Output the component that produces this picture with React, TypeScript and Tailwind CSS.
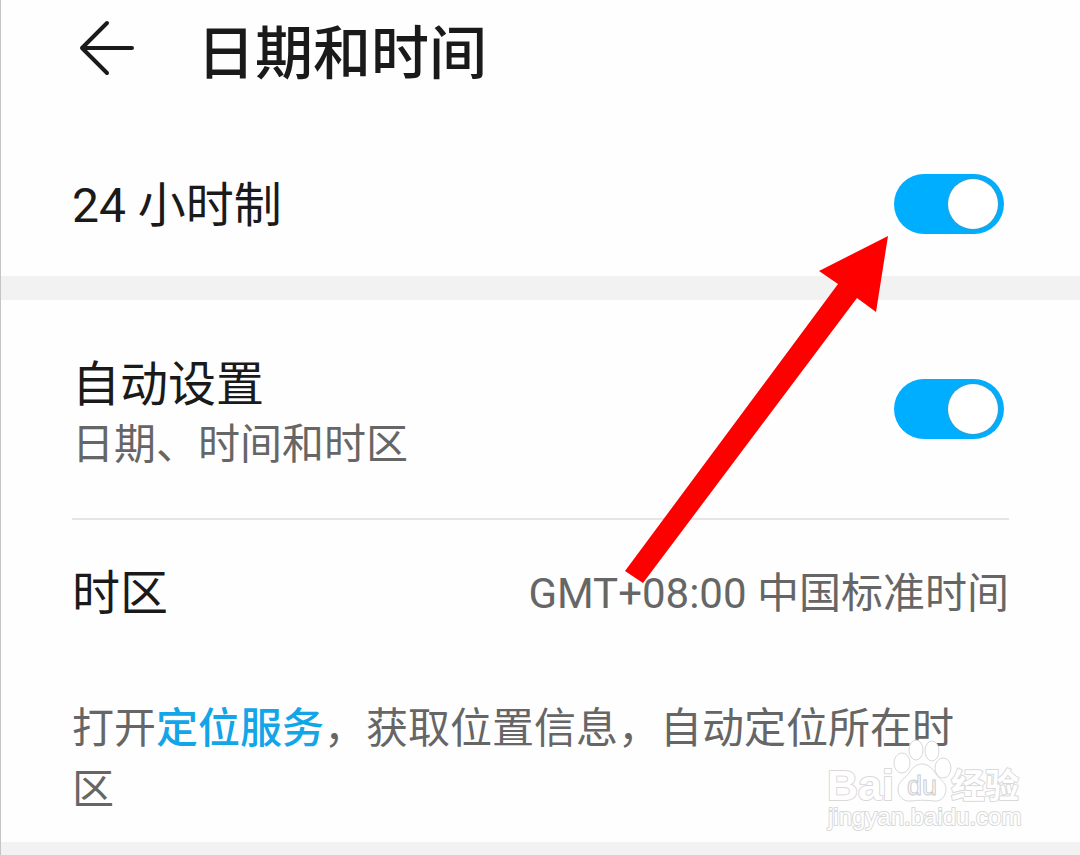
import React, { useState } from "react";

const Switch = ({ id, defaultChecked }: { id: string; defaultChecked?: boolean }) => {
    const [checked, setChecked] = useState(!!defaultChecked);
    return (
        <input
            id={id}
            type="checkbox"
            checked={checked}
            onChange={(e) => setChecked(e.target.checked)}
            className="mr-[5px] flex h-[60px] w-[110px] shrink-0 cursor-pointer appearance-none items-center rounded-full bg-gray-300 px-[6px] before:size-[50px] before:rounded-full before:bg-white before:content-[''] checked:justify-end checked:bg-[#00aeff] before:shadow-[0_0_2px_1px_#2f9fd0]"
        />
    )
}

const BackIcon = () => (
    <svg viewBox="0 0 56 56" className="size-14" fill="none" stroke="#1a1a1a" strokeWidth="4" strokeLinecap="round" strokeLinejoin="round" aria-hidden="true">
        <path d="M53 28H3M28 3L3 28L28 53" />
    </svg>
)

const PointerArrow = () => (
    <svg viewBox="0 0 264 348" className="pointer-events-none absolute top-[236px] right-[191px] w-[264px]" aria-hidden="true">
        <path d="M263 0L194 35L213 48L0 335L18 347L232 62L251 76Z" fill="#ff0000" />
    </svg>
)

const Watermark = () => (
    <svg viewBox="0 0 200 96" className="pointer-events-none absolute right-[56px] bottom-4 w-[200px] overflow-visible" fill="#ffffff" stroke="#d9d9d9" strokeWidth="1" aria-label="Baidu 经验">
        <g strokeWidth="2" paintOrder="stroke" strokeLinejoin="round">
            <text x="3" y="57" fontSize="43" fontWeight="700" fontFamily="'Liberation Sans', Arial, sans-serif">Bai</text>
            <text x="127" y="55" fontSize="34" fontWeight="700" fontFamily="'Noto Sans CJK SC', sans-serif">经验</text>
            <text x="4" y="82" fontSize="24" fontFamily="'Liberation Sans', Arial, sans-serif">jingyan.baidu.com</text>
        </g>
        <ellipse cx="78" cy="20" rx="8" ry="10" />
        <ellipse cx="92" cy="7" rx="7" ry="10" />
        <ellipse cx="108" cy="8" rx="7" ry="10" />
        <ellipse cx="119" cy="25" rx="8" ry="10" />
        <path d="M98 21C92 21 88 25 85 30C82 35 74 38 74 46C74 54 80 59 87 58C94 57 102 57 110 58C117 59 122 53 122 46C122 39 115 36 112 31C108 25 104 21 98 21Z" />
        <text x="83" y="52" fontSize="27" stroke="#cccccc" strokeWidth="1" fontFamily="'Liberation Sans', Arial, sans-serif">du</text>
    </svg>
)

const App = () => {
    return (
        <div className="relative flex min-h-screen flex-col border-l border-[#c4c4c4] bg-[#fefefe] font-[Roboto,'Noto_Sans_CJK_SC',sans-serif] text-[#1a1a1a]">
            <header className="mb-7 flex h-[104px] items-center gap-[62px] px-[78px]">
                <button type="button" aria-label="返回" className="-mt-2 cursor-pointer">
                    <BackIcon />
                </button>
                <h1 className="pt-1 text-[58px] leading-[64px] font-medium">日期和时间</h1>
            </header>

            <main>
                <section className="px-[71px]">
                    <div className="flex h-36 items-center justify-between">
                        <label htmlFor="hour24" className="pt-1 text-[48px] leading-[60px]">24 小时制</label>
                        <Switch id="hour24" defaultChecked />
                    </div>
                </section>

                <div className="h-6 bg-[#f2f2f2]" />

                <section className="px-[71px]">
                    <div className="flex h-[220px] items-center justify-between border-b-2 border-[#e5e5e5]">
                        <label htmlFor="auto" className="flex flex-col pt-3">
                            <span className="text-[48px] leading-[60px]">自动设置</span>
                            <span className="text-[42px] leading-[60px] text-[#666666]">日期、时间和时区</span>
                        </label>
                        <Switch id="auto" defaultChecked />
                    </div>
                    <button type="button" className="flex h-[148px] w-full cursor-pointer items-center justify-between">
                        <span className="text-[48px] leading-[60px]">时区</span>
                        <span className="text-[42px] leading-[60px] text-[#666666]">GMT+08:00 中国标准时间</span>
                    </button>
                    <p className="pt-[30px] pr-6 pb-[22px] text-[42px] leading-[61px] text-[#666666]">
                        打开<a href="#location" className="font-medium text-[#12a5e8]">定位服务</a>，获取位置信息，自动定位所在时区
                    </p>
                </section>
            </main>

            <div className="min-h-3 flex-1 bg-[#f2f2f2]" />

            <PointerArrow />
            <Watermark />
        </div>
    )
}

export default App
